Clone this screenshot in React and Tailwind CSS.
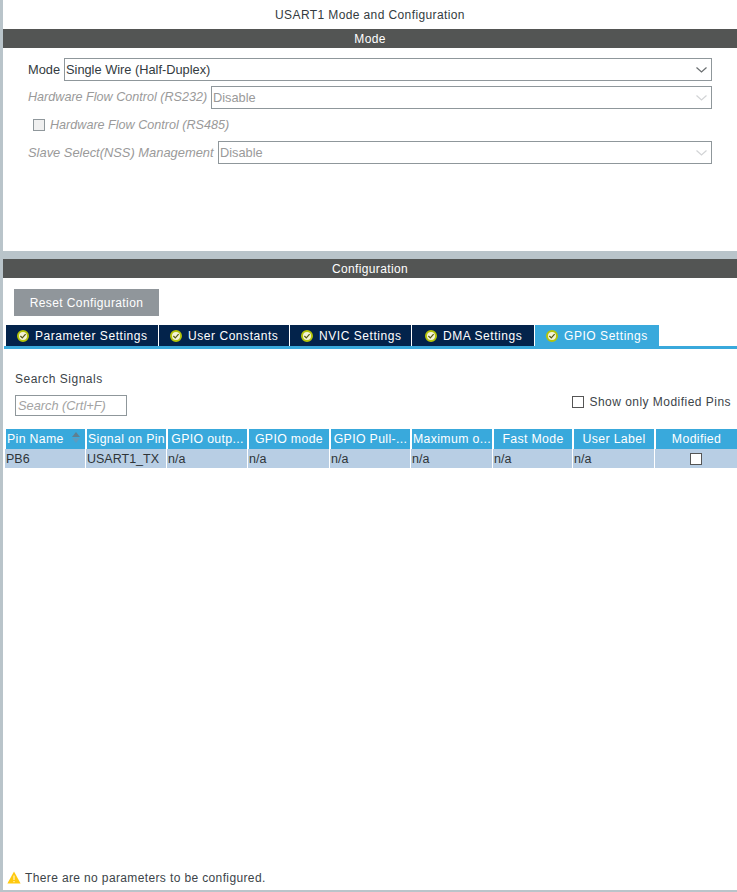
import React from "react";

const font = { fontFamily: '"Liberation Sans", Arial, sans-serif' };

const Chevron = ({ muted }) => (
  <svg width="11" height="6" viewBox="0 0 11 6" fill="none" className="absolute right-[4px] top-[8px]">
    <path d="M0.5 0.5 L5.5 5 L10.5 0.5" stroke={muted ? "#d2d4d6" : "#6a6e70"} strokeWidth="1.2" />
  </svg>
);

const Select = ({ value, muted, className }) => (
  <div
    className={`relative h-[23px] border border-[#8f979b] bg-white pl-[1px] text-[12.8px] leading-[21px] ${
      muted ? "text-[#9a9a9a]" : "text-[#333b40]"
    } ${className}`}
  >
    {value}
    <Chevron muted={muted} />
  </div>
);

const Check = () => (
  <svg width="12" height="12" viewBox="0 0 12 12" className="shrink-0">
    <circle cx="6" cy="6" r="5" fill="#f4f4d8" stroke="#b4c409" strokeWidth="2" />
    <path d="M3.4 6 L5.3 7.9 L8.6 4.2" fill="none" stroke="#55590f" strokeWidth="1.2" />
  </svg>
);

const tabs = [
  { label: "Parameter Settings", w: "w-[152px]", pad: "pl-[11px]" },
  { label: "User Constants", w: "w-[130px]", pad: "pl-[11px]" },
  { label: "NVIC Settings", w: "w-[121px]", pad: "pl-[11px]" },
  { label: "DMA Settings", w: "w-[122px]", pad: "pl-[13px]" },
  { label: "GPIO Settings", w: "w-[124px]", pad: "pl-[11px]", active: true },
];

const columns = [
  { label: "Pin Name", w: "w-[79px]", left: true, sort: true },
  { label: "Signal on Pin", w: "w-[79px]", left: true },
  { label: "GPIO outp...", w: "w-[79px]" },
  { label: "GPIO mode", w: "w-[80px]" },
  { label: "GPIO Pull-...", w: "w-[79px]" },
  { label: "Maximum o...", w: "w-[80px]" },
  { label: "Fast Mode", w: "w-[78px]" },
  { label: "User Label", w: "w-[80px]" },
  { label: "Modified", w: "w-[81px]" },
];

const cells = [
  { text: "PB6", w: "w-[80px]" },
  { text: "USART1_TX", w: "w-[80px]" },
  { text: "n/a", w: "w-[80px]" },
  { text: "n/a", w: "w-[81px]" },
  { text: "n/a", w: "w-[80px]" },
  { text: "n/a", w: "w-[81px]" },
  { text: "n/a", w: "w-[79px]" },
  { text: "n/a", w: "w-[81px]" },
];

const SectionBar = ({ children }) => (
  <div className="h-[19px] overflow-hidden bg-[#535554] text-center text-[12px] leading-[21px] tracking-[0.35px] text-white">
    {children}
  </div>
);

export default function App() {
  return (
    <div className="flex h-[892px] w-[737px] overflow-hidden bg-white text-[#3c4449]" style={font}>
      <div className="w-[3px] shrink-0 bg-[#b9c4ca]" />
      <div className="flex min-w-0 flex-1 flex-col">
        <div className="h-[29px] overflow-hidden text-center text-[12px] leading-[30px] tracking-[0.39px] text-[#333b40]">
          USART1 Mode and Configuration
        </div>
        <SectionBar>Mode</SectionBar>

        <div className="h-[203px] pt-[10px]">
          <div className="flex items-center pr-[25px]">
            <span className="w-[61px] pl-[25px] text-[12.8px] text-[#333b40]">Mode</span>
            <Select value="Single Wire (Half-Duplex)" className="flex-1" />
          </div>
          <div className="mt-[5px] flex items-center pr-[25px]">
            <span className="w-[208px] shrink-0 pl-[25px] text-[12.6px] italic text-[#9a9a9a] whitespace-nowrap">
              Hardware Flow Control (RS232)
            </span>
            <Select value="Disable" muted className="flex-1" />
          </div>
          <div className="mt-[9px] flex h-[13px] items-center pl-[30px]">
            <span className="h-[12px] w-[12px] border border-[#8f979b] bg-[#f0f0f0]" />
            <span className="ml-[5px] pt-[1px] text-[12.6px] italic text-[#9a9a9a]">Hardware Flow Control (RS485)</span>
          </div>
          <div className="mt-[10px] flex items-center pr-[25px]">
            <span className="w-[215px] shrink-0 pl-[25px] text-[12.9px] italic text-[#9a9a9a] whitespace-nowrap">
              Slave Select(NSS) Management
            </span>
            <Select value="Disable" muted className="flex-1" />
          </div>
        </div>

        <div className="h-[8px] bg-[#b9c4ca]" />
        <SectionBar>Configuration</SectionBar>

        <div className="flex min-h-0 flex-1 flex-col">
          <button className="ml-[11px] mt-[11px] h-[27px] w-[145px] bg-[#90969b] text-[12px] tracking-[0.4px] text-white">
            Reset Configuration
          </button>

          <div className="ml-[1px] mt-[9px] flex gap-[1px] border-b-[3px] border-[#39a9dc] pl-[2px]">
            {tabs.map((t) => (
              <div
                key={t.label}
                className={`flex h-[21px] items-center text-[12px] tracking-[0.55px] text-white ${t.w} ${t.pad} ${
                  t.active ? "bg-[#39a9dc]" : "bg-[#03234b]"
                }`}
              >
                <Check />
                <span className="ml-[6px] whitespace-nowrap">{t.label}</span>
              </div>
            ))}
          </div>

          <div className="ml-[12px] mt-[23px] text-[12px] leading-[14px] tracking-[0.5px]">Search Signals</div>
          <div className="flex items-start pr-[6px]">
            <div className="ml-[12px] mt-[9px] h-[21px] w-[112px] border border-[#8f979b] pl-[2px] text-[12.8px] italic leading-[20px] text-[#a3a3a3]">
              Search (Crtl+F)
            </div>
            <label className="ml-auto mt-[7px] flex items-center text-[12px] tracking-[0.47px]">
              <span className="h-[12px] w-[12px] border border-[#555] bg-white" />
              <span className="ml-[5px]">Show only Modified Pins</span>
            </label>
          </div>

          <div className="mt-[13px] flex gap-[2px] pl-[3px]">
            {columns.map((c) => (
              <div
                key={c.label}
                className={`relative h-[20px] shrink-0 overflow-hidden whitespace-nowrap bg-[#39a9dc] text-[12.3px] leading-[20px] tracking-[0.35px] text-white ${c.w} ${
                  c.left ? "pl-[1px]" : "text-center"
                }`}
              >
                {c.label}
                {c.sort && (
                  <svg width="8" height="11" viewBox="0 0 8 11" className="absolute right-[5px] top-[3px]">
                    <path d="M4 0 L8 5 L0 5 Z" fill="#5f7f90" />
                    <path d="M4 11 L8 6 L0 6 Z" fill="#5d9cc0" />
                  </svg>
                )}
              </div>
            ))}
          </div>
          <div className="flex h-[19px] gap-[1px] pl-[2px]">
            {cells.map((c, i) => (
              <div
                key={i}
                className={`h-[19px] shrink-0 overflow-hidden bg-[#b8cee4] pl-[1px] text-[12.5px] leading-[20px] text-[#2e3438] ${c.w}`}
              >
                {c.text}
              </div>
            ))}
            <div className="flex h-[19px] w-[82px] shrink-0 items-center justify-center bg-[#b8cee4]">
              <span className="h-[12px] w-[12px] border border-[#555] bg-white" />
            </div>
          </div>

          <div className="mt-auto flex h-[21px] items-start pl-[4px]">
            <svg width="14" height="13" viewBox="0 0 14 13" className="mt-[2px] shrink-0">
              <path d="M7 0.5 L13.6 12.5 L0.4 12.5 Z" fill="#ffc90e" />
              <rect x="6.4" y="4.5" width="1.2" height="4.5" fill="#fff6c8" />
              <rect x="6.4" y="10" width="1.2" height="1.2" fill="#fff6c8" />
            </svg>
            <span className="ml-[4px] pt-[1px] text-[12px] leading-[17px] tracking-[0.37px]">There are no parameters to be configured.</span>
          </div>
          <div className="h-[2px] bg-[#b9c4ca]" />
        </div>
      </div>
    </div>
  );
}
